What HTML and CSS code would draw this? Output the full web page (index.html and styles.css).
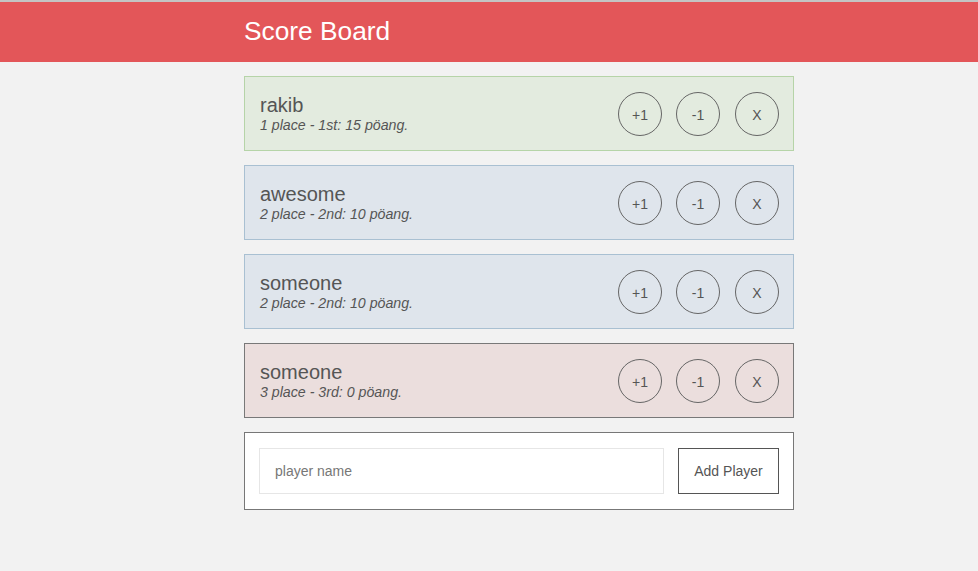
FILE: index.html
```html
<!DOCTYPE html>
<html>
<head>
<meta charset="utf-8">
<title>Score Board</title>
<link rel="stylesheet" href="styles.css">
</head>
<body>
<header class="header">
  <div class="wrap"><h1 class="title">Score Board</h1></div>
</header>
<main class="wrap list">
  <div class="player first">
    <div class="info">
      <div class="name">rakib</div>
      <div class="meta">1 place - 1st: 15 pöang.</div>
    </div>
    <div class="actions">
      <button class="circle">+1</button>
      <button class="circle">-1</button>
      <button class="circle remove">X</button>
    </div>
  </div>
  <div class="player second">
    <div class="info">
      <div class="name">awesome</div>
      <div class="meta">2 place - 2nd: 10 pöang.</div>
    </div>
    <div class="actions">
      <button class="circle">+1</button>
      <button class="circle">-1</button>
      <button class="circle remove">X</button>
    </div>
  </div>
  <div class="player second">
    <div class="info">
      <div class="name">someone</div>
      <div class="meta">2 place - 2nd: 10 pöang.</div>
    </div>
    <div class="actions">
      <button class="circle">+1</button>
      <button class="circle">-1</button>
      <button class="circle remove">X</button>
    </div>
  </div>
  <div class="player third">
    <div class="info">
      <div class="name">someone</div>
      <div class="meta">3 place - 3rd: 0 pöang.</div>
    </div>
    <div class="actions">
      <button class="circle">+1</button>
      <button class="circle">-1</button>
      <button class="circle remove">X</button>
    </div>
  </div>
  <form class="add-form">
    <input class="name-input" type="text" placeholder="player name">
    <button class="add-btn" type="button">Add Player</button>
  </form>
</main>
</body>
</html>
```
FILE: styles.css
```css
* { box-sizing: border-box; }
html, body {
  margin: 0;
  padding: 0;
  background: #f2f2f2;
  font-family: "Liberation Sans", Arial, sans-serif;
  color: #555;
}
.wrap {
  width: 550px;
  margin-left: 244px;
}
.header {
  background: #e35659;
  border-top: 2px solid #c4c4c4;
  height: 62px;
}
.title {
  margin: 0;
  font-weight: normal;
  font-size: 26.3px;
  line-height: 58px;
  color: #fff;
}
.list {
  display: flex;
  flex-direction: column;
  gap: 14px;
  padding-top: 14px;
}
.player {
  height: 75px;
  display: flex;
  align-items: center;
  justify-content: space-between;
  padding: 0 14px 0 15px;
  border: 1px solid #777;
}
.player.first { background: #e3ebdf; border-color: #b6d4a8; }
.player.second { background: #dfe5ec; border-color: #a9c0d2; }
.player.third { background: #ebdedd; border-color: #787878; }
.name {
  font-size: 20px;
  line-height: 23px;
  color: #555;
}
.meta {
  font-size: 14.2px;
  line-height: 16px;
  font-style: italic;
  color: #555;
}
.actions {
  display: flex;
  gap: 14px;
}
.circle {
  width: 44px;
  height: 44px;
  border-radius: 50%;
  border: 1px solid #666;
  background: transparent;
  font-family: "Liberation Sans", Arial, sans-serif;
  font-size: 14px;
  color: #555;
  padding: 2px 0 0;
}
.circle.remove { margin-left: 1px; }
.add-form {
  margin: 0;
  height: 78px;
  display: flex;
  align-items: center;
  gap: 14px;
  padding: 15px 14px;
  background: #fff;
  border: 1px solid #777;
}
.name-input {
  width: 405px;
  height: 46px;
  border: 1px solid #e6e6e6;
  padding: 0 15px;
  font-family: "Liberation Sans", Arial, sans-serif;
  font-size: 14px;
  color: #555;
  background: #fff;
}
.name-input::placeholder { color: #777; }
.add-btn {
  width: 101px;
  height: 46px;
  border: 1px solid #555;
  background: #fff;
  font-family: "Liberation Sans", Arial, sans-serif;
  font-size: 14px;
  color: #555;
  padding: 0;
}
```
